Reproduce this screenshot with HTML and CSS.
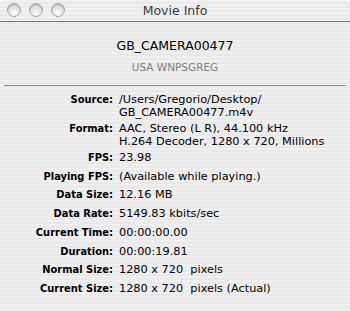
FILE: index.html
```html
<!DOCTYPE html>
<html>
<head>
<meta charset="utf-8">
<link rel="stylesheet" href="styles.css">
</head>
<body>
<div class="window">
  <div class="titlebar">
    <div class="lights">
      <span class="light"></span><span class="light"></span><span class="light"></span>
    </div>
    <div class="title">Movie Info</div>
  </div>
  <div class="header">
    <div class="name">GB_CAMERA00477</div>
    <div class="sub">USA WNPSGREG</div>
  </div>
  <div class="sep"></div>
  <div class="info first">
    <div class="label">Source:</div><div class="value">/Users/Gregorio/Desktop/<br>GB_CAMERA00477.m4v</div>
    <div class="label">Format:</div><div class="value">AAC, Stereo (L R), 44.100 kHz<br>H.264 Decoder, 1280 x 720, Millions</div>
    <div class="label">FPS:</div><div class="value">23.98</div>
  </div>
  <div class="info second">
    <div class="label">Playing FPS:</div><div class="value">(Available while playing.)</div>
    <div class="label">Data Size:</div><div class="value">12.16 MB</div>
    <div class="label">Data Rate:</div><div class="value">5149.83 kbits/sec</div>
    <div class="label">Current Time:</div><div class="value">00:00:00.00</div>
    <div class="label">Duration:</div><div class="value">00:00:19.81</div>
    <div class="label">Normal Size:</div><div class="value">1280 x 720&nbsp; pixels</div>
    <div class="label">Current Size:</div><div class="value">1280 x 720&nbsp; pixels (Actual)</div>
  </div>
</div>
</body>
</html>
```
FILE: styles.css
```css
html, body {
  margin: 0;
  padding: 0;
  background: #ffffff;
}
body {
  font-family: "DejaVu Sans", "Lucida Grande", sans-serif;
  color: #000;
}
.window {
  width: 350px;
  height: 311px;
  border-radius: 5px 5px 0 0;
  overflow: hidden;
  background: repeating-linear-gradient(to bottom, #efefef 0, #efefef 2px, #e9e9e9 2px, #e9e9e9 4px);
}
.titlebar {
  position: relative;
  height: 21px;
  border-bottom: 1px solid #7c7c7c;
  display: flex;
  align-items: center;
  justify-content: center;
  background: repeating-linear-gradient(to bottom, #f1f1f1 0, #f1f1f1 2px, #eaeaea 2px, #eaeaea 4px);
}
.lights {
  position: absolute;
  left: 7px;
  top: 3px;
  display: flex;
  gap: 8px;
}
.light {
  width: 12px;
  height: 12px;
  border-radius: 50%;
  border: 1px solid #a8a8a8;
  background: radial-gradient(circle at 50% 78%, #fbfbfb 0, #e6e6e6 45%, #cacaca 100%);
  box-shadow: inset 0 1px 1px rgba(0,0,0,0.22);
}
.title {
  font-size: 12.5px;
  color: #3a3a3a;
  line-height: 21px;
}
.header {
  padding-top: 16px;
  text-align: center;
}
.name {
  font-size: 12.5px;
  line-height: 16px;
}
.sub {
  margin-top: 6px;
  font-size: 10.5px;
  line-height: 14px;
  color: #7f7f7f;
}
.sep {
  margin: 11px 4px 0 4px;
  height: 1px;
  background: #8e8e8e;
}
.info {
  display: grid;
  grid-template-columns: 113px 1fr;
  column-gap: 6px;
  font-size: 11.3px;
  line-height: 13px;
}
.first {
  margin-top: 6.5px;
  row-gap: 3px;
}
.second {
  margin-top: 6px;
  row-gap: 5.8px;
}
.label {
  text-align: right;
  font-family: "DejaVu Sans Condensed", "DejaVu Sans", sans-serif;
  font-stretch: condensed;
  font-size: 11px;
  font-weight: bold;
  white-space: nowrap;
}
.value {
  white-space: nowrap;
}
```
